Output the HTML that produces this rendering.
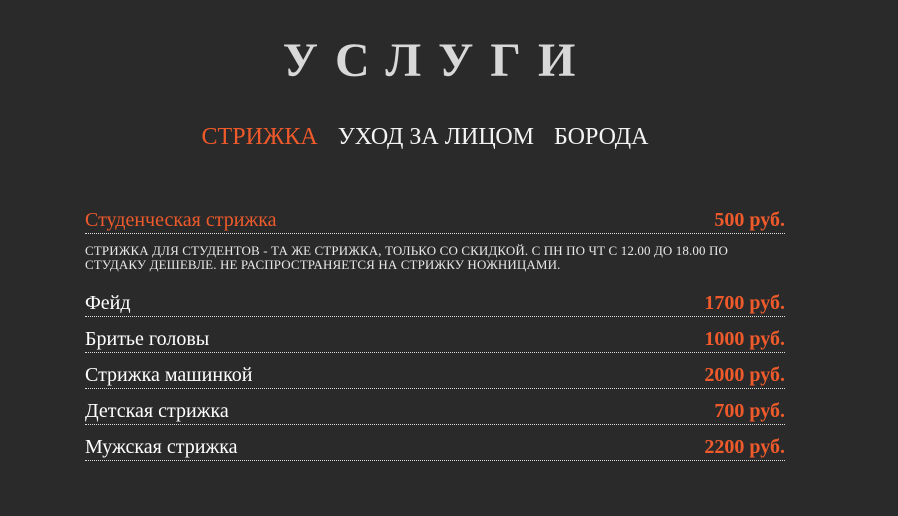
<!DOCTYPE html>
<html><head><meta charset="utf-8"><style>
body{margin:0;width:898px;height:516px;background:#2a2a2a;font-family:"Liberation Serif",serif;overflow:hidden;position:relative}
h1{position:absolute;top:35px;left:-20px;width:898px;margin:0;text-align:center;font-size:48px;font-weight:bold;color:#d8d8d8;letter-spacing:17px;text-indent:17px;line-height:52px}
.nav{position:absolute;top:123px;left:-24px;width:898px;text-align:center;font-size:24px;line-height:28px;color:#f4f4f4}
.nav span{margin:0 10px}
.nav .a{color:#ee5a2b}
.row{position:absolute;left:85px;width:700px;border-bottom:1px dotted #ddd;font-size:20px;line-height:26px;color:#fff;height:26px}
.row b{position:absolute;right:0;top:0;color:#ee5a2b}
.row.o{color:#ee5a2b}
.desc{position:absolute;left:85px;top:244px;width:680px;font-size:13px;line-height:14px;letter-spacing:0.12px;color:#e8e8e8}
</style></head><body>
<h1>УСЛУГИ</h1>
<div class="nav"><span class="a">СТРИЖКА</span><span>УХОД ЗА ЛИЦОМ</span><span>БОРОДА</span></div>
<div class="row o" style="top:207px">Студенческая стрижка<b>500 руб.</b></div>
<div class="desc">СТРИЖКА ДЛЯ СТУДЕНТОВ - ТА ЖЕ СТРИЖКА, ТОЛЬКО СО СКИДКОЙ. С ПН ПО ЧТ С 12.00 ДО 18.00 ПО СТУДАКУ ДЕШЕВЛЕ. НЕ РАСПРОСТРАНЯЕТСЯ НА СТРИЖКУ НОЖНИЦАМИ.</div>
<div class="row" style="top:290px">Фейд<b>1700 руб.</b></div>
<div class="row" style="top:326px">Бритье головы<b>1000 руб.</b></div>
<div class="row" style="top:362px">Стрижка машинкой<b>2000 руб.</b></div>
<div class="row" style="top:398px">Детская стрижка<b>700 руб.</b></div>
<div class="row" style="top:434px">Мужская стрижка<b>2200 руб.</b></div>
</body></html>
